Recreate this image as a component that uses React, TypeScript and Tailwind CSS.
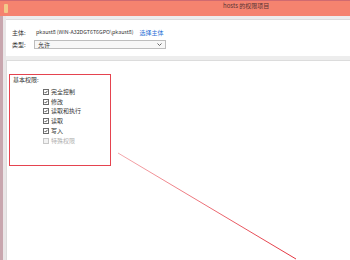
import React from "react";

const font = { fontFamily: '"Noto Sans CJK SC", "Liberation Sans", sans-serif' };

function Check({ label, disabled }: { label: string; disabled?: boolean }) {
  return (
    <div className="flex items-center h-[9.8px] gap-[2px]">
      <div
        className={
          "w-[6px] h-[6px] border flex items-center justify-center " +
          (disabled ? "border-[#c8c8c8] bg-[#f2f2f2]" : "border-[#6b6b6b] bg-white")
        }
      >
        {!disabled && (
          <svg width="6" height="6" viewBox="0 0 6 6">
            <path d="M0.8 3 L2.4 4.6 L5.2 1.2" stroke="#222" strokeWidth="1.1" fill="none" />
          </svg>
        )}
      </div>
      <span className={"text-[6px] leading-none " + (disabled ? "text-[#b0b0b0]" : "text-[#333]")}>{label}</span>
    </div>
  );
}

export default function App() {
  return (
    <div className="relative w-[350px] h-[260px] overflow-hidden bg-white flex flex-col" style={font}>
      {/* title bar */}
      <div className="h-[16px] bg-[#f5836f] border-t border-[#d06a70] flex items-center relative shrink-0">
        <div className="ml-[4px] w-[4px] h-[9px] bg-[#f3c98a] rounded-[1px]" />
        <div className="absolute left-[223px] top-[2px] text-[6px] text-[#5a3434] leading-none whitespace-nowrap">
          hosts 的权限项目
        </div>
      </div>
      <div className="flex flex-1">
        <div className="w-[3px] bg-[#c8a6ae] shrink-0" />
        <div className="w-[3px] bg-[#e9e6e7] shrink-0" />
        <div className="flex-1 flex flex-col bg-[#ededed] pt-[3px]">
          {/* top panel */}
          <div className="h-[37px] bg-white border-t border-[#dcdcdc] flex flex-col pl-[6px] pt-[8px] gap-[3px]">
            <div className="flex items-center h-[9px] text-[6px] leading-none text-[#333]">
              <span className="w-[24px]">主体:</span>
              <span className="text-[5.3px]">pkaust8 (WIN-A32DGT6T6GPO\pkaust8)</span>
              <span className="ml-[6px] text-[#2a6fd6]">选择主体</span>
            </div>
            <div className="flex items-center h-[9px] text-[6px] leading-none text-[#333]">
              <span className="w-[22px]">类型:</span>
              <div className="w-[132px] h-[9px] border border-[#bdbdbd] bg-[#f7f7f7] flex items-center justify-between px-[3px]">
                <span>允许</span>
                <svg width="5" height="3" viewBox="0 0 5 3">
                  <path d="M0.5 0.5 L2.5 2.5 L4.5 0.5" stroke="#555" strokeWidth="0.9" fill="none" />
                </svg>
              </div>
            </div>
          </div>
          <div className="h-[4px]" />
          {/* main area */}
          <div className="flex-1 bg-white border-t border-l border-[#dcdcdc] pl-[2px] pt-[13px]">
            <div className="w-[102px] h-[92px] border-[1.5px] border-[#e5434f] pl-[3px] pt-[1px]">
              <div className="text-[6px] leading-none text-[#333] h-[8px] flex items-center">基本权限:</div>
              <div className="ml-[30px] mt-[3px] flex flex-col">
                <Check label="完全控制" />
                <Check label="修改" />
                <Check label="读取和执行" />
                <Check label="读取" />
                <Check label="写入" />
                <Check label="特殊权限" disabled />
              </div>
            </div>
          </div>
        </div>
      </div>
      {/* annotation line */}
      <svg className="absolute left-0 top-0" width="350" height="260" viewBox="0 0 350 260">
        <defs>
          <linearGradient id="lg" x1="118" y1="153" x2="296" y2="259" gradientUnits="userSpaceOnUse">
            <stop offset="0" stopColor="#f4a9ad" />
            <stop offset="1" stopColor="#e3343f" />
          </linearGradient>
        </defs>
        <line x1="118" y1="153" x2="296" y2="259" stroke="url(#lg)" strokeWidth="1" />
      </svg>
    </div>
  );
}
